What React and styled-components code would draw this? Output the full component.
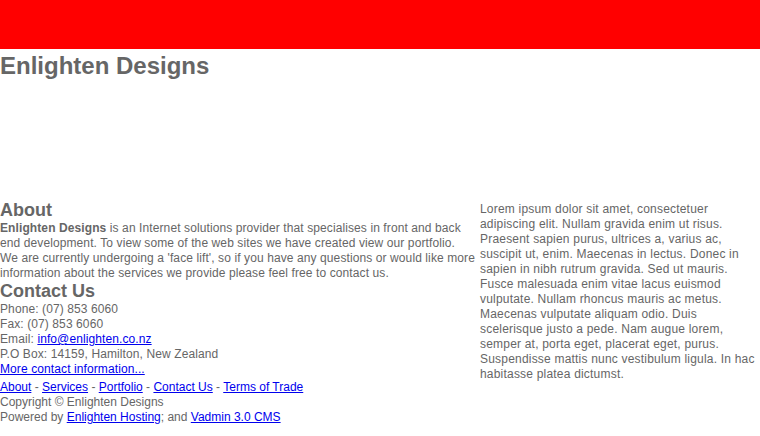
import React from 'react';
import styled, { createGlobalStyle } from 'styled-components';

const Global = createGlobalStyle`
  body {
    margin: 0;
    font-family: "Liberation Sans", Arial, sans-serif;
    font-size: 12px;
    line-height: 15px;
    color: #666;
    background: #fff;
  }
  a { color: #0000ee; }
`;

const Header = styled.header`
  height: 200px;
`;

const RedBar = styled.div`
  height: 49px;
  background: #ff0000;
`;

const Title = styled.h1`
  margin: 0;
  padding-top: 3px;
  font-size: 24px;
  line-height: 28px;
  font-weight: bold;
  color: #666;
`;

const Main = styled.div`
  display: flex;
  align-items: flex-start;
  gap: 4px;
`;

const Left = styled.div`
  width: 476px;
  flex: none;
  letter-spacing: 0.1px;
`;

const Right = styled.div`
  flex: 1;
  padding-top: 2px;
  letter-spacing: 0.2px;
`;

const Heading = styled.h2`
  margin: 0;
  font-size: 18px;
  line-height: 21px;
  font-weight: bold;
  letter-spacing: 0;
  color: #666;
`;

const Para = styled.p`
  margin: 0;
`;

const Line = styled.div``;

const Footer = styled.div`
  margin-top: 3px;
  letter-spacing: 0;
`;

export default function App() {
  return (
    <>
      <Global />
      <Header>
        <RedBar />
        <Title>Enlighten Designs</Title>
      </Header>
      <Main>
        <Left>
          <Heading>About</Heading>
          <Para>
            <b>Enlighten Designs</b> is an Internet solutions provider that specialises in front and back end development. To view some of the web sites we have created view our portfolio.<br />
            We are currently undergoing a 'face lift', so if you have any questions or would like more information about the services we provide please feel free to contact us.
          </Para>
          <Heading>Contact Us</Heading>
          <Line>Phone: (07) 853 6060</Line>
          <Line>Fax: (07) 853 6060</Line>
          <Line>Email: <a href="#">info@enlighten.co.nz</a></Line>
          <Line>P.O Box: 14159, Hamilton, New Zealand</Line>
          <Line><a href="#">More contact information...</a></Line>
          <Footer>
            <Line>
              <a href="#">About</a> - <a href="#">Services</a> - <a href="#">Portfolio</a> - <a href="#">Contact Us</a> - <a href="#">Terms of Trade</a>
            </Line>
            <Line>Copyright © Enlighten Designs</Line>
            <Line>Powered by <a href="#">Enlighten Hosting</a>; and <a href="#">Vadmin 3.0 CMS</a></Line>
          </Footer>
        </Left>
        <Right>
          <Para>
            Lorem ipsum dolor sit amet, consectetuer adipiscing elit. Nullam gravida enim ut risus. Praesent sapien purus, ultrices a, varius ac, suscipit ut, enim. Maecenas in lectus. Donec in sapien in nibh rutrum gravida. Sed ut mauris. Fusce malesuada enim vitae lacus euismod vulputate. Nullam rhoncus mauris ac metus. Maecenas vulputate aliquam odio. Duis scelerisque justo a pede. Nam augue lorem, semper at, porta eget, placerat eget, purus. Suspendisse mattis nunc vestibulum ligula. In hac habitasse platea dictumst.
          </Para>
        </Right>
      </Main>
    </>
  );
}
